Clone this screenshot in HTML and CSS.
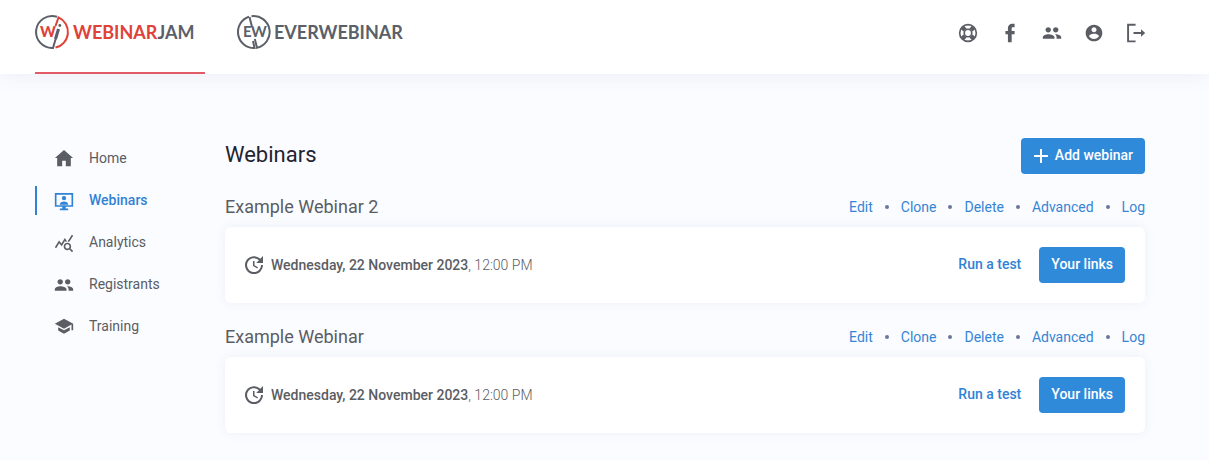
FILE: index.html
```html
<!DOCTYPE html>
<html lang="en">
<head>
<meta charset="utf-8">
<title>Webinars</title>
<link rel="stylesheet" href="styles.css">
</head>
<body>
<svg class="sprite" aria-hidden="true">
  <symbol id="people" viewBox="0 0 24 24"><path d="M16.500 11.500c1.800 0 3.200-1.500 3.200-3.300S18.300 5 16.500 5s-3.300 1.400-3.300 3.200 1.500 3.300 3.300 3.300zm-9 0c1.800 0 3.200-1.500 3.200-3.300S9.300 5 7.500 5 4.200 6.400 4.200 8.200s1.500 3.300 3.300 3.300zm0 2C5 13.500 1 14.700 1 17.200V19h14v-1.800c0-2.500-4.700-3.700-7.500-3.700zm9 0l-1 .1c1.200.8 2 2 2 3.600V19H23v-1.800c0-2.500-4-3.700-6.500-3.700z"/></symbol>
  <symbol id="update" viewBox="3 2 20 20"><path d="M21 10.120h-6.780l2.740-2.820c-2.730-2.700-7.150-2.800-9.880-.1-2.730 2.710-2.730 7.080 0 9.790s7.150 2.710 9.880 0C18.320 15.650 19 14.080 19 12.100h2c0 1.980-.88 4.550-2.640 6.290-3.510 3.480-9.210 3.480-12.720 0-3.500-3.470-3.530-9.110-.02-12.580s9.140-3.470 12.650 0L21 3v7.120zM12.500 8v4.250l3.500 2.080-.72 1.210L11 13V8h1.500z"/></symbol>
</svg>
<header class="topbar">
  <nav class="brands" aria-label="Products">
    <a class="brand brand-active" href="#">
      <svg class="mark" viewBox="0 0 36 36" aria-hidden="true">
        <path class="ring" d="M22 2.800A16 16 0 1 0 18 34L23.500 15"/>
        <path class="ring ring-red" d="M20.500 12L23.500 3.400A16 16 0 0 1 20.500 33.600"/>
        <text class="mark-red" x="5" y="23">W</text>
        <path class="stem" d="M20.500 25L23.500 15"/>
        <circle class="dot" cx="24.800" cy="11.500" r="1.400"/>
      </svg>
      <span class="word"><span class="red">WEBINAR</span>JAM</span>
    </a>
    <a class="brand" href="#">
      <svg class="mark" viewBox="0 0 36 36" aria-hidden="true">
        <path class="ring" d="M13 2.800A16 16 0 0 0 18.500 34L17 27"/>
        <path class="ring" d="M15.500 2.200A16 16 0 0 1 21 33.700L18.800 25M16 13L13.500 3"/>
        <text class="mark-ew" x="7" y="23">E</text>
        <text class="mark-ew" x="15" y="23">W</text>
      </svg>
      <span class="word">EVERWEBINAR</span>
    </a>
  </nav>
  <div class="tools">
    <a href="#" aria-label="Support"><svg viewBox="0 0 24 24"><g fill="none" stroke="currentColor"><circle cx="12" cy="12" r="10" stroke-width="2"/><circle cx="12" cy="12" r="4.500" stroke-width="2"/><path stroke-width="5.500" d="M5.400 5.400l3 3M18.600 5.400l-3 3M5.400 18.600l3-3M18.600 18.600l-3-3"/></g></svg></a>
    <a href="#" aria-label="Facebook"><svg viewBox="0 0 24 24"><path d="M17.500 1v4.200H15c-.8 0-1 .8-1 1.500v2.800h3.500v4H14V23H9.500v-9.500h-3v-4h3V6a5 5 0 0 1 5-5h3z"/></svg></a>
    <a href="#" aria-label="Community"><svg viewBox="0 0 24 24"><use href="#people"/></svg></a>
    <a href="#" aria-label="Account"><svg viewBox="0 0 24 24"><path d="M12 2C6.480 2 2 6.480 2 12s4.480 10 10 10 10-4.480 10-10S17.520 2 12 2zm0 3c1.660 0 3 1.340 3 3s-1.340 3-3 3-3-1.340-3-3 1.340-3 3-3zm0 14.200c-2.500 0-4.710-1.280-6-3.220.03-1.990 4-3.080 6-3.080 1.990 0 5.970 1.090 6 3.080-1.290 1.940-3.500 3.220-6 3.220z"/></svg></a>
    <a href="#" aria-label="Log out"><svg viewBox="0 0 24 24"><path fill="none" stroke="currentColor" stroke-width="2.300" d="M11.500 2H2.500v20h9M9 12h10"/><path d="M18 7.500l5 4.500-5 4.500z"/></svg></a>
  </div>
</header>
<div class="page">
  <nav class="side" aria-label="Main">
    <a href="#"><svg viewBox="1 2 22 22"><path d="M10 21v-6h4v6h5.500v-9H22L12 3 2 12h2.500v9z"/></svg>Home</a>
    <a class="current" href="#"><svg viewBox="0 0 24 24"><path fill="none" stroke="currentColor" stroke-width="2" d="M2 3.500h20V18H2z"/><circle cx="12" cy="8.500" r="2.600"/><path d="M7 16c0-2.500 3-3.500 5-3.500s5 1 5 3.500v.5H7zM10 18h4v3h3v2H7v-2h3z"/></svg>Webinars</a>
    <a href="#"><svg viewBox="0 0 24 24"><path d="M19.880 18.470c.44-.7.700-1.510.7-2.390 0-2.490-2.010-4.500-4.500-4.500s-4.500 2.010-4.500 4.500 2.010 4.500 4.490 4.500c.88 0 1.700-.26 2.390-.7L21.580 23 23 21.580l-3.120-3.110zm-3.800.11c-1.380 0-2.500-1.120-2.500-2.500s1.120-2.500 2.500-2.500 2.500 1.120 2.500 2.500-1.120 2.500-2.500 2.500zm-.36-8.500c-.74.020-1.450.180-2.100.45l-.55-.83-3.800 6.180-3.010-3.520-3.630 5.810L1 17l5-8 3 3.500L13 6l2.720 4.080zm2.590.5c-.64-.28-1.330-.45-2.050-.49L21.380 2 23 3.180l-4.690 7.400z"/></svg>Analytics</a>
    <a href="#"><svg viewBox="0 0 24 24"><use href="#people"/></svg>Registrants</a>
    <a href="#"><svg viewBox="0 1 24 24"><path d="M5 13.180v4L12 21l7-3.820v-4L12 17l-7-3.820zM12 3L1 9l11 6 9-4.910V17h2V9L12 3z"/></svg>Training</a>
  </nav>
  <main class="content">
    <div class="head">
      <h1>Webinars</h1>
      <button class="btn" type="button"><svg viewBox="0 0 16 16" aria-hidden="true"><path d="M8 1v14M1 8h14"/></svg>Add webinar</button>
    </div>
    <section class="webinar">
      <div class="row">
        <h2>Example Webinar 2</h2>
        <ul class="actions">
          <li><a href="#">Edit</a></li><li><a href="#">Clone</a></li><li><a href="#">Delete</a></li><li><a href="#">Advanced</a></li><li><a href="#">Log</a></li>
        </ul>
      </div>
      <div class="card">
        <p class="when"><svg viewBox="0 0 20 20" aria-hidden="true"><use href="#update"/></svg><span><strong>Wednesday, 22 November 2023</strong>, 12:00 PM</span></p>
        <a class="test" href="#">Run a test</a>
        <button class="btn" type="button">Your links</button>
      </div>
    </section>
    <section class="webinar">
      <div class="row">
        <h2>Example Webinar</h2>
        <ul class="actions">
          <li><a href="#">Edit</a></li><li><a href="#">Clone</a></li><li><a href="#">Delete</a></li><li><a href="#">Advanced</a></li><li><a href="#">Log</a></li>
        </ul>
      </div>
      <div class="card">
        <p class="when"><svg viewBox="0 0 20 20" aria-hidden="true"><use href="#update"/></svg><span><strong>Wednesday, 22 November 2023</strong>, 12:00 PM</span></p>
        <a class="test" href="#">Run a test</a>
        <button class="btn" type="button">Your links</button>
      </div>
    </section>
  </main>
</div>
</body>
</html>
```

FILE: styles.css
```css
* { box-sizing: border-box; }
body {
  margin: 0;
  background: #fbfcff;
  color: #5a5d63;
  font: 14px/20px Roboto, sans-serif;
}
a { color: inherit; text-decoration: none; }
h1, h2, p, ul { margin: 0; padding: 0; }
svg { fill: currentColor; flex: none; }
.sprite { display: none; }

.topbar {
  display: flex;
  justify-content: space-between;
  padding: 0 63px 0 35px;
  background: #fff;
  box-shadow: 0 0 20px rgba(60, 80, 140, 0.09);
}
.brands { display: flex; gap: 31px; }
.brand {
  display: flex;
  gap: 2px;
  min-width: 170px;
  padding: 14px 6px 22px 0;
  border-bottom: 2px solid transparent;
  color: #5b6068;
}
.brand-active { border-color: #e35b66; }
.mark { width: 36px; height: 36px; }
.ring { fill: none; stroke: #5b6068; stroke-width: 2; }
.ring-red { stroke: #de4238; }
.stem { fill: none; stroke: #5b6068; stroke-width: 3; }
.dot { fill: #5b6068; }
.mark-red, .mark-ew { font: 900 15px Lato, sans-serif; fill: #de4238; }
.mark-ew { font-weight: 700; fill: #5b6068; }
.word { font: 700 18px/36px Lato, sans-serif; }
.red { color: #de4238; }

.tools { display: flex; align-items: center; gap: 22px; padding-bottom: 8px; }
.tools a { display: flex; }
.tools svg { width: 20px; height: 20px; }

.page { display: flex; padding: 64px 64px 24px 35px; }
.side { display: flex; flex-direction: column; gap: 13px; width: 190px; padding-top: 6px; }
.side a {
  display: flex;
  align-items: center;
  gap: 15px;
  height: 29px;
  padding: 0 0 2px 17px;
  border-left: 2px solid transparent;
}
.side svg { width: 20px; height: 20px; margin-top: 2px; }
.side .current { color: #3182d5; border-color: #3182d5; font-weight: 500; }

.content { flex: 1; }
.head { display: flex; justify-content: space-between; margin-bottom: 21px; }
h1 { color: #1f2430; font-size: 22px; font-weight: 400; line-height: 34px; }
.btn {
  display: flex;
  align-items: center;
  gap: 6px;
  height: 36px;
  padding: 0 12px 2px;
  border: 0;
  border-radius: 4px;
  background: #308ada;
  color: #fff;
  font: 500 14px/20px Roboto, sans-serif;
}
.btn svg { width: 16px; height: 16px; margin-top: 2px; stroke: #fff; stroke-width: 2; }
.webinar { margin-bottom: 22px; }
.row { display: flex; justify-content: space-between; margin-bottom: 8px; }
h2 { font-size: 18px; font-weight: 400; line-height: 24px; }
.actions { display: flex; list-style: none; line-height: 24px; color: #3684d6; }
.actions li { display: flex; align-items: center; }
.actions li + li::before {
  content: "";
  width: 4px;
  height: 4px;
  margin: 0 12px;
  border-radius: 50%;
  background: #6b769c;
}
.card {
  display: flex;
  align-items: center;
  padding: 20px;
  border-radius: 6px;
  background: #fff;
  box-shadow: 0 0 12px rgba(60, 70, 140, 0.07);
}
.when { display: flex; align-items: center; gap: 6px; margin-right: auto; font-weight: 300; }
.when svg { width: 20px; height: 20px; }
.when strong { font-weight: 500; }
.test { margin-right: 18px; padding-bottom: 2px; color: #3182d5; font-weight: 500; }
```
